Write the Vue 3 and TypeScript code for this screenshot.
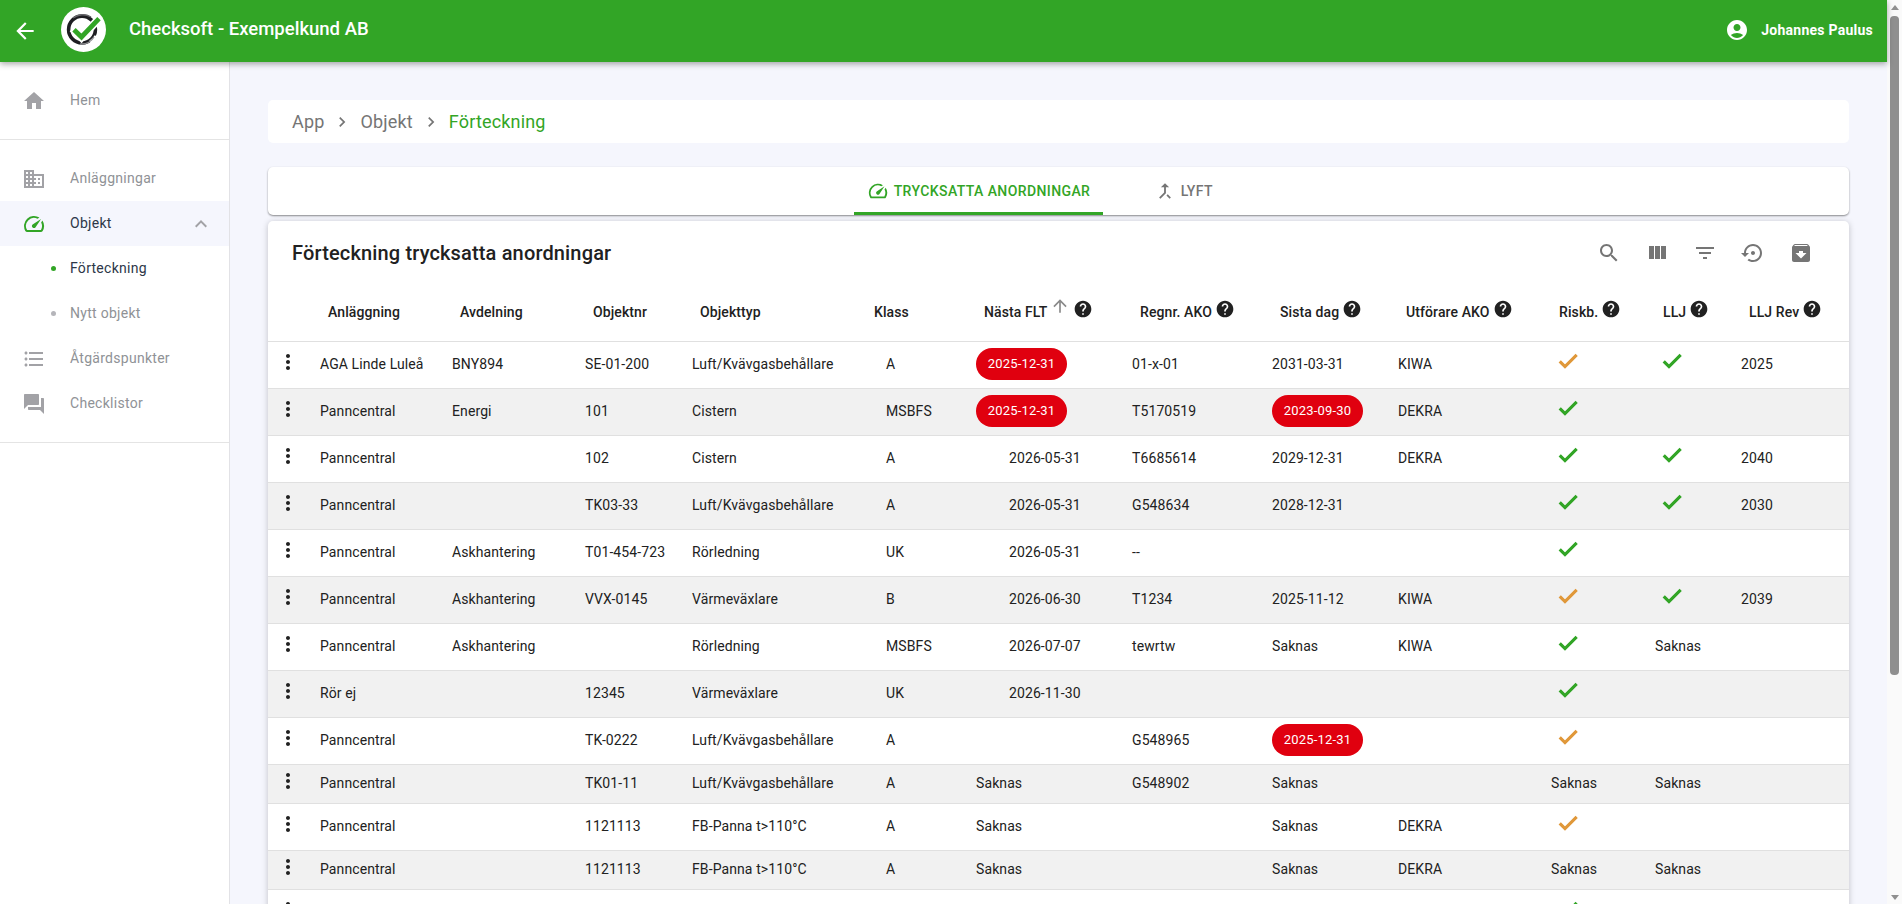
<script setup lang="ts">
type Cell = string | { pill: string } | { check: 'ok' | 'warn' }

interface Row {
  compact?: boolean
  cells: Cell[]
}

const P = (pill: string): Cell => ({ pill })
const OK: Cell = { check: 'ok' }
const WARN: Cell = { check: 'warn' }
const LUFT = 'Luft/Kvävgasbehållare'

const icons = {
  back: 'M20 11H7.83l5.59-5.59L12 4l-8 8 8 8 1.41-1.41L7.83 13H20v-2z',
  home: 'M10 20v-6h4v6h5v-8h3L12 3 2 12h3v8z',
  domain: 'M12 7V3H2v18h20V7H12zM6 19H4v-2h2v2zm0-4H4v-2h2v2zm0-4H4V9h2v2zm0-4H4V5h2v2zm4 12H8v-2h2v2zm0-4H8v-2h2v2zm0-4H8V9h2v2zm0-4H8V5h2v2zm10 12h-8v-2h2v-2h-2v-2h2v-2h-2V9h8v10zm-2-8h-2v2h2v-2zm0 4h-2v2h2v-2z',
  speed: 'M20.38 8.57l-1.23 1.85a8 8 0 0 1-.22 7.58H5.07A8 8 0 0 1 15.58 6.85l1.85-1.23A10 10 0 0 0 3.35 19a2 2 0 0 0 1.72 1h13.85a2 2 0 0 0 1.74-1 10 10 0 0 0-.27-10.44zm-9.79 6.84a2 2 0 0 0 2.83 0l5.66-8.49-8.49 5.66a2 2 0 0 0 0 2.83z',
  less: 'M12 8l-6 6 1.41 1.41L12 10.83l4.59 4.58L18 14z',
  list: 'M4 10.5c-.83 0-1.5.67-1.5 1.5s.67 1.5 1.5 1.5 1.5-.67 1.5-1.5-.67-1.5-1.5-1.5zm0-6c-.83 0-1.5.67-1.5 1.5S3.17 7.5 4 7.5 5.5 6.83 5.5 6 4.83 4.5 4 4.5zm0 12c-.83 0-1.5.68-1.5 1.5s.68 1.5 1.5 1.5 1.5-.68 1.5-1.5-.67-1.5-1.5-1.5zM7 19h14v-2H7v2zm0-6h14v-2H7v2zm0-8v2h14V5H7z',
  forum: 'M21 6h-2v9H6v2c0 .55.45 1 1 1h11l4 4V7c0-.55-.45-1-1-1zm-4 6V3c0-.55-.45-1-1-1H3c-.55 0-1 .45-1 1v14l4-4h10c.55 0 1-.45 1-1z',
  account: 'M12 2C6.48 2 2 6.48 2 12s4.48 10 10 10 10-4.48 10-10S17.52 2 12 2zm0 4c1.93 0 3.5 1.57 3.5 3.5S13.93 13 12 13s-3.5-1.57-3.5-3.5S10.07 6 12 6zm0 14c-2.03 0-4.43-.82-6.14-2.88C7.55 15.8 9.68 15 12 15s4.45.8 6.14 2.12C16.43 19.18 14.03 20 12 20z',
  search: 'M15.5 14h-.79l-.28-.27C15.41 12.59 16 11.11 16 9.5 16 5.91 13.09 3 9.5 3S3 5.91 3 9.5 5.91 16 9.5 16c1.61 0 3.09-.59 4.23-1.57l.27.28v.79l5 4.99L20.49 19l-4.99-5zm-6 0C7.01 14 5 11.99 5 9.5S7.01 5 9.5 5 14 7.01 14 9.5 11.99 14 9.5 14z',
  columns: 'M10 18h5V5h-5v13zm-6 0h5V5H4v13zM16 5v13h5V5h-5z',
  filter: 'M10 18h4v-2h-4v2zM3 6v2h18V6H3zm3 7h12v-2H6v2z',
  restore: 'M14 12c0-1.1-.9-2-2-2s-2 .9-2 2 .9 2 2 2 2-.9 2-2zm-2-9c-4.97 0-9 4.03-9 9H0l4 4 4-4H5c0-3.87 3.13-7 7-7s7 3.13 7 7-3.13 7-7 7c-1.51 0-2.91-.49-4.06-1.3l-1.42 1.44C8.04 20.3 9.94 21 12 21c4.97 0 9-4.03 9-9s-4.03-9-9-9z',
  archive: 'M20.54 5.23l-1.39-1.68C18.88 3.21 18.47 3 18 3H6c-.47 0-.88.21-1.16.55L3.46 5.23C3.17 5.57 3 6.02 3 6.5V19c0 1.1.9 2 2 2h14c1.1 0 2-.9 2-2V6.5c0-.48-.17-.93-.46-1.27zM12 17.5L6.5 12H10v-2h4v2h3.5L12 17.5zM5.12 5l.81-1h12l.94 1H5.12z',
  more: 'M12 8c1.1 0 2-.9 2-2s-.9-2-2-2-2 .9-2 2 .9 2 2 2zm0 2c-1.1 0-2 .9-2 2s.9 2 2 2 2-.9 2-2-.9-2-2-2zm0 6c-1.1 0-2 .9-2 2s.9 2 2 2 2-.9 2-2-.9-2-2-2z',
  help: 'M12 2C6.48 2 2 6.48 2 12s4.48 10 10 10 10-4.48 10-10S17.52 2 12 2zm1 17h-2v-2h2v2zm2.07-7.75l-.9.92C13.45 12.9 13 13.5 13 15h-2v-.5c0-1.1.45-2.1 1.17-2.83l1.24-1.26c.37-.36.59-.86.59-1.41 0-1.1-.9-2-2-2s-2 .9-2 2H8c0-2.21 1.79-4 4-4s4 1.79 4 4c0 .88-.36 1.68-.93 2.25z',
  up: 'M4 12l1.41 1.41L11 7.83V20h2V7.83l5.58 5.59L20 12l-8-8-8 8z',
  check: 'M9 16.17L4.83 12l-1.42 1.41L9 19 21 7l-1.41-1.41z',
  merge: 'M17 20.41 18.41 19 15 15.59 13.59 17 17 20.41zM7.5 8H11v5.59L5.59 19 7 20.41l6-6V8h3.5L12 3.5 7.5 8z',
  next: 'M10 6L8.59 7.41 13.17 12l-4.58 4.59L10 18l6-6z',
}

const toolbar = [icons.search, icons.columns, icons.filter, icons.restore, icons.archive]

const columns = [
  { label: 'Anläggning', w: 132 },
  { label: 'Avdelning', w: 133 },
  { label: 'Objektnr', w: 107 },
  { label: 'Objekttyp', w: 182 },
  { label: 'Klass', w: 102 },
  { label: 'Nästa FLT', w: 156, sort: true, help: true },
  { label: 'Regnr. AKO', w: 140, help: true },
  { label: 'Sista dag', w: 126, help: true },
  { label: 'Utförare AKO', w: 153, help: true },
  { label: 'Riskb.', w: 104, help: true },
  { label: 'LLJ', w: 86, help: true },
  { label: 'LLJ Rev', w: 116, help: true },
]

const rows: Row[] = [
  { cells: ['AGA Linde Luleå', 'BNY894', 'SE-01-200', LUFT, 'A', P('2025-12-31'), '01-x-01', '2031-03-31', 'KIWA', WARN, OK, '2025'] },
  { cells: ['Panncentral', 'Energi', '101', 'Cistern', 'MSBFS', P('2025-12-31'), 'T5170519', P('2023-09-30'), 'DEKRA', OK, '', ''] },
  { cells: ['Panncentral', '', '102', 'Cistern', 'A', '2026-05-31', 'T6685614', '2029-12-31', 'DEKRA', OK, OK, '2040'] },
  { cells: ['Panncentral', '', 'TK03-33', LUFT, 'A', '2026-05-31', 'G548634', '2028-12-31', '', OK, OK, '2030'] },
  { cells: ['Panncentral', 'Askhantering', 'T01-454-723', 'Rörledning', 'UK', '2026-05-31', '--', '', '', OK, '', ''] },
  { cells: ['Panncentral', 'Askhantering', 'VVX-0145', 'Värmeväxlare', 'B', '2026-06-30', 'T1234', '2025-11-12', 'KIWA', WARN, OK, '2039'] },
  { cells: ['Panncentral', 'Askhantering', '', 'Rörledning', 'MSBFS', '2026-07-07', 'tewrtw', 'Saknas', 'KIWA', OK, 'Saknas', ''] },
  { cells: ['Rör ej', '', '12345', 'Värmeväxlare', 'UK', '2026-11-30', '', '', '', OK, '', ''] },
  { cells: ['Panncentral', '', 'TK-0222', LUFT, 'A', '', 'G548965', P('2025-12-31'), '', WARN, '', ''] },
  { compact: true, cells: ['Panncentral', '', 'TK01-11', LUFT, 'A', 'Saknas', 'G548902', 'Saknas', '', 'Saknas', 'Saknas', ''] },
  { cells: ['Panncentral', '', '1121113', 'FB-Panna t>110°C', 'A', 'Saknas', '', 'Saknas', 'DEKRA', WARN, '', ''] },
  { compact: true, cells: ['Panncentral', '', '1121113', 'FB-Panna t>110°C', 'A', 'Saknas', '', 'Saknas', 'DEKRA', 'Saknas', 'Saknas', ''] },
  { cells: ['', '', '', '', '', '', '', '', '', OK, '', ''] },
]

const isStr = (c: Cell): c is string => typeof c === 'string'
const isPill = (c: Cell): c is { pill: string } => typeof c === 'object' && 'pill' in c
const checkOf = (c: Cell): string => (typeof c === 'object' && 'check' in c ? c.check : '')

function cellClass(c: Cell, i: number): string {
  const out: string[] = []
  if (i === 4) out.push('klass')
  if (i === 5 && isStr(c) && c !== 'Saknas') out.push('date')
  if (checkOf(c)) out.push('has-check')
  return out.join(' ')
}
</script>

<template>
  <div class="shell">
    <div class="page">
      <header class="appbar">
        <svg class="back" viewBox="0 0 24 24"><path :d="icons.back" /></svg>
        <svg class="logo" viewBox="0 0 45 45">
          <circle cx="22.5" cy="22.5" r="22.5" fill="#fff" />
          <circle cx="21" cy="22.5" r="13.4" fill="none" stroke="#1e1e22" stroke-width="3.6" />
          <path d="M29 35a15.500 15.500 0 0 0 6-6" fill="none" stroke="#fff" stroke-width="3" />
          <path d="M12 11a16 16 0 0 1 18-1" fill="none" stroke="#66666a" stroke-width="1.4" />
          <path d="M33 30a15 15 0 0 1-14 7" fill="none" stroke="#8a8a8e" stroke-width="1.4" />
          <path d="M11.500 21.500l9 9L39 10.500" fill="none" stroke="#fff" stroke-width="8" />
          <path d="M13 22.700l7.500 7.300L38 11.700" fill="none" stroke="#32a526" stroke-width="4.8" />
        </svg>
        <span class="brand">Checksoft - Exempelkund AB</span>
        <svg class="account" viewBox="0 0 24 24"><path :d="icons.account" /></svg>
        <span class="user">Johannes Paulus</span>
      </header>

      <div class="body">
        <aside class="sidebar">
          <nav class="group">
            <a class="item"><svg viewBox="0 0 24 24"><path :d="icons.home" /></svg><span>Hem</span></a>
          </nav>
          <nav class="group">
            <a class="item"><svg viewBox="0 0 24 24"><path :d="icons.domain" /></svg><span>Anläggningar</span></a>
            <a class="item open">
              <svg class="green" viewBox="0 0 24 24"><path :d="icons.speed" /></svg>
              <span>Objekt</span>
              <svg class="chev" viewBox="0 0 24 24"><path :d="icons.less" /></svg>
            </a>
            <a class="sub active"><i></i><span>Förteckning</span></a>
            <a class="sub"><i></i><span>Nytt objekt</span></a>
            <a class="item"><svg viewBox="0 0 24 24"><path :d="icons.list" /></svg><span>Åtgärdspunkter</span></a>
            <a class="item"><svg viewBox="0 0 24 24"><path :d="icons.forum" /></svg><span>Checklistor</span></a>
          </nav>
        </aside>

        <main class="main">
          <div class="crumbs">
            <span>App</span>
            <svg viewBox="0 0 24 24"><path :d="icons.next" /></svg>
            <span>Objekt</span>
            <svg viewBox="0 0 24 24"><path :d="icons.next" /></svg>
            <span class="current">Förteckning</span>
          </div>

          <div class="tabs">
            <div class="tab active">
              <svg viewBox="0 0 24 24"><path :d="icons.speed" /></svg>
              <span>Trycksatta anordningar</span>
            </div>
            <div class="tab">
              <svg viewBox="0 0 24 24"><path :d="icons.merge" /></svg>
              <span>Lyft</span>
            </div>
          </div>

          <section class="card">
            <div class="toolbar">
              <h2>Förteckning trycksatta anordningar</h2>
              <div class="tools">
                <span v-for="(d, i) in toolbar" :key="i" class="tool">
                  <svg viewBox="0 0 24 24"><path :d="d" /></svg>
                </span>
              </div>
            </div>
            <table>
              <colgroup>
                <col class="menu-col" />
                <col v-for="c in columns" :key="c.label" :style="{ width: c.w + 'px' }" />
              </colgroup>
              <thead>
                <tr>
                  <th></th>
                  <th v-for="c in columns" :key="c.label">
                    <div class="th-in">
                      <span>{{ c.label }}</span>
                      <svg v-if="c.sort" class="sort" viewBox="0 0 24 24"><path :d="icons.up" /></svg>
                      <svg v-if="c.help" class="help" viewBox="0 0 24 24"><path :d="icons.help" /></svg>
                    </div>
                  </th>
                </tr>
              </thead>
              <tbody>
                <tr v-for="(r, ri) in rows" :key="ri" :class="{ compact: r.compact, odd: ri % 2 === 1 }">
                  <td class="menu"><svg viewBox="0 0 24 24"><path :d="icons.more" /></svg></td>
                  <td v-for="(c, ci) in r.cells" :key="ci" :class="cellClass(c, ci)">
                    <span v-if="isPill(c)" class="pill">{{ c.pill }}</span>
                    <svg v-else-if="checkOf(c)" class="check" :class="checkOf(c)" viewBox="0 0 24 24"><path :d="icons.check" /></svg>
                    <template v-else>{{ c }}</template>
                  </td>
                </tr>
              </tbody>
            </table>
          </section>
        </main>
      </div>
    </div>

    <div class="scrollbar">
      <span class="arrow-up"></span>
      <span class="thumb"></span>
      <span class="arrow-down"></span>
    </div>
  </div>
</template>

<style>
html,
body {
  margin: 0;
  height: 100%;
  overflow: hidden;
}
</style>

<style scoped>
.shell {
  display: flex;
  height: 904px;
  overflow: hidden;
  font-family: Roboto, "Liberation Sans", sans-serif;
  color: #212121;
}
.page {
  flex: 1;
  min-width: 0;
  display: flex;
  flex-direction: column;
}
.appbar {
  position: relative;
  z-index: 2;
  flex: none;
  height: 62px;
  display: flex;
  align-items: center;
  background: #32a526;
  color: #fff;
  box-shadow: 0 2px 6px rgba(0, 0, 0, 0.35);
}
.back {
  width: 26px;
  height: 26px;
  margin-left: 12px;
  fill: #fff;
}
.logo {
  width: 45px;
  height: 45px;
  margin-left: 23px;
  margin-top: -3px;
}
.brand {
  margin-left: 23px;
  font-size: 18.5px;
  font-weight: 500;
  margin-top: -4px;
}
.account {
  width: 24px;
  height: 24px;
  margin-left: auto;
  fill: #fff;
  margin-top: -2px;
}
.user {
  margin-left: 12px;
  margin-right: 14px;
  font-size: 14px;
  font-weight: 700;
  letter-spacing: 0.25px;
  margin-top: -3px;
}
.body {
  flex: 1;
  min-height: 0;
  display: flex;
}
.sidebar {
  flex: none;
  width: 229px;
  background: #fff;
  border-right: 1px solid #e2e2e6;
}
.group {
  padding: 16px 0;
  border-bottom: 1px solid #e4e4e4;
}
.item,
.sub {
  display: flex;
  align-items: center;
  height: 45px;
  font-size: 14px;
  letter-spacing: 0.02em;
  color: #8f9296;
}
.item span,
.sub span {
  margin-top: -2px;
}
.item {
  padding-left: 22px;
}
.item svg {
  width: 24px;
  height: 24px;
  fill: #a2a2a6;
  margin-right: 24px;
  flex: none;
}
.item svg.green {
  fill: #32a526;
}
.item.open {
  background: #f5f6fd;
  color: #2d3748;
}
.item svg.chev {
  margin-left: auto;
  margin-right: 16px;
  fill: #a2a2a6;
}
.sub {
  padding-left: 51px;
}
.sub i {
  width: 5px;
  height: 5px;
  border-radius: 50%;
  background: #b5b5ba;
  margin-right: 14px;
}
.sub.active {
  color: #2d3748;
}
.sub.active i {
  background: #32a526;
}
.main {
  flex: 1;
  min-width: 0;
  background: #f5f6fd;
  padding: 38px 38px 0;
}
.crumbs {
  height: 43px;
  display: flex;
  align-items: center;
  padding-left: 24px;
  background: #fff;
  border-radius: 5px;
  font-size: 18px;
  letter-spacing: 0.17px;
  color: #757575;
}
.crumbs svg {
  width: 20px;
  height: 20px;
  fill: #757575;
  margin: 0 8px;
}
.crumbs .current {
  color: #32a526;
}
.tabs {
  margin-top: 24px;
  height: 48px;
  display: flex;
  justify-content: center;
  background: #fff;
  border-radius: 5px;
  box-shadow: 0 1px 2px rgba(0, 0, 0, 0.45);
}
.tab {
  min-width: 160px;
  padding: 0 13px;
  box-sizing: border-box;
  display: flex;
  align-items: center;
  justify-content: center;
  gap: 5px;
  font-size: 14px;
  font-weight: 500;
  letter-spacing: 0.02857em;
  text-transform: uppercase;
  color: #757575;
}
.tab svg {
  width: 22px;
  height: 22px;
  fill: #757575;
}
.tab.active {
  color: #32a526;
  border-bottom: 3px solid #32a526;
  padding-top: 3px;
}
.tab.active svg {
  fill: #32a526;
}
.card {
  margin-top: 6px;
  background: #fff;
  border-radius: 5px 5px 0 0;
  box-shadow: 0 1px 6px rgba(0, 0, 0, 0.22);
}
.toolbar {
  height: 62px;
  padding: 2px 24px 0;
  box-sizing: border-box;
  display: flex;
  align-items: center;
  justify-content: space-between;
}
.toolbar h2 {
  margin: 0;
  font-size: 20px;
  font-weight: 500;
  letter-spacing: 0.0075em;
}
.tools {
  display: flex;
}
.tool {
  width: 48px;
  height: 48px;
  display: flex;
  align-items: center;
  justify-content: center;
}
.tool svg {
  width: 24px;
  height: 24px;
  fill: #757575;
}
table {
  width: 100%;
  table-layout: fixed;
  border-collapse: separate;
  border-spacing: 0;
  font-size: 14px;
  letter-spacing: 0.1px;
}
.menu-col {
  width: 44px;
}
th {
  height: 59px;
  padding: 0 0 0 16px;
  box-sizing: border-box;
  border-bottom: 1px solid #e0e0e0;
  font-weight: 500;
  text-align: left;
}
th:nth-child(6) {
  padding-left: 8px;
}
.th-in {
  display: flex;
  align-items: center;
  white-space: nowrap;
}
.sort {
  width: 20px;
  height: 20px;
  margin: -12px 0 0 3px;
  fill: #8a8a8a;
}
.help {
  width: 20px;
  height: 20px;
  margin: -6px 0 0 3px;
  fill: #212121;
}
td {
  height: 47px;
  padding: 0 0 2px 8px;
  box-sizing: border-box;
  border-bottom: 1px solid #e0e0e0;
  white-space: nowrap;
}
.compact td {
  height: 39px;
}
.odd td {
  background: #f1f1f1;
}
td.menu svg {
  display: block;
  width: 24px;
  height: 24px;
  margin-bottom: 4px;
  fill: #212121;
}
td.klass {
  padding-left: 20px;
}
td.date {
  padding-left: 41px;
}
td.has-check {
  padding-left: 13px;
}
.pill {
  display: inline-block;
  width: 91px;
  height: 32px;
  line-height: 32px;
  border-radius: 16px;
  background: #e0000f;
  color: #fff;
  font-size: 13px;
  letter-spacing: 0.2px;
  text-align: center;
  vertical-align: middle;
}
.check {
  display: block;
  width: 24px;
  height: 24px;
  margin-bottom: 7px;
  stroke-width: 1.1;
}
.check.ok {
  fill: #32a526;
  stroke: #32a526;
}
.check.warn {
  fill: #e0983a;
  stroke: #e0983a;
}
.scrollbar {
  flex: none;
  width: 15px;
  background: #fafafa;
  display: flex;
  flex-direction: column;
  align-items: center;
}
.arrow-up,
.arrow-down {
  width: 0;
  height: 0;
  border-left: 4px solid transparent;
  border-right: 4px solid transparent;
}
.arrow-up {
  margin-top: 5px;
  border-bottom: 5px solid #8f8f8f;
}
.thumb {
  width: 9px;
  height: 659px;
  margin-top: 6px;
  background: #8f8f8f;
  border-radius: 4px;
}
.arrow-down {
  margin-top: auto;
  margin-bottom: 4px;
  border-top: 5px solid #8f8f8f;
}
</style>
